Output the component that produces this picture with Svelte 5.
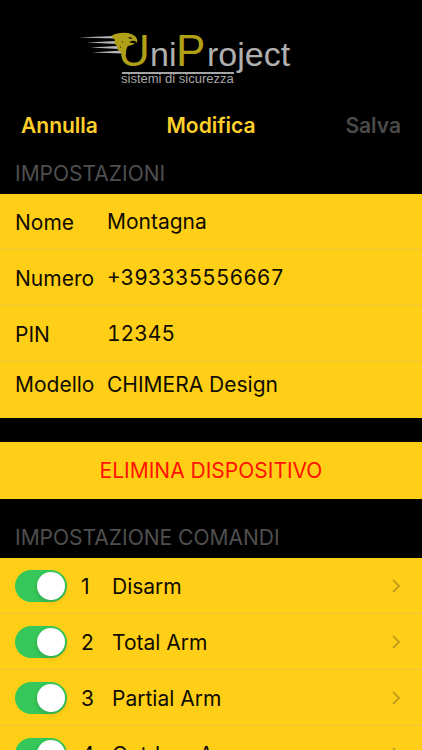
<script>
  let fields = $state([
    { id: "nome", label: "Nome", type: "text", value: "Montagna" },
    { id: "numero", label: "Numero", type: "tel", value: "+393335556667" },
    { id: "pin", label: "PIN", type: "text", value: "12345" },
  ])

  let commands = $state([
    { number: 1, name: "Disarm", enabled: true },
    { number: 2, name: "Total Arm", enabled: true },
    { number: 3, name: "Partial Arm", enabled: true },
    { number: 4, name: "Outdoor Arm", enabled: true },
  ])
</script>

<main class="screen">
  <header>
    <svg class="logo" viewBox="0 0 220 70" role="img" aria-label="UniProject">
      <!-- trailing feathers -->
      <g fill="#b4b4b4">
        <path d="M0 19.5 L35 18 L36 20.5 Z" />
        <path d="M9 24.5 L37 23 L39 26 Z" />
        <path d="M12 29.5 L39 28 L41 31 Z" />
        <path d="M14 34.5 L43 32.5 L44 35.5 Z" />
      </g>
      <text class="big" x="40" y="48">U</text>
      <text class="small" x="72" y="48">ni</text>
      <text class="big" x="98" y="48">P</text>
      <text class="small" x="129" y="48">roject</text>
      <!-- eagle head -->
      <path
        d="M33 18 Q40 14 50 15 Q55 16 58 19 Q60 22 59 25 Q57 22 54 23 L51 24 L54 25 L57 25 Q54 28 50 28 Q48 30 48 36 L44 38 L43 34 L40 32 L39 28 L36 25 L37 22 Z"
        fill="#b0a018"
      />
      <path d="M50 19 L55 20 L52 21 Z" fill="#000" />
      <path d="M44 23 L45 25 M42 28 L43 30" stroke="#5c5409" stroke-width="1" />
      <rect x="44" y="54" width="112" height="2" fill="#a6a6a6" />
      <text class="tagline" x="43" y="65">sistemi di sicurezza</text>
    </svg>
    <nav>
      <button class="action" type="button">Annulla</button>
      <h1>Modifica</h1>
      <button class="action save" type="button" disabled>Salva</button>
    </nav>
  </header>

  <h2>IMPOSTAZIONI</h2>
  <section class="group">
    {#each fields as field (field.id)}
      <div class="row">
        <label class="field-label" for={field.id}>{field.label}</label>
        <input id={field.id} class="text" type={field.type} bind:value={field.value} />
      </div>
    {/each}
    <div class="row model">
      <span>Modello</span>
      <span>CHIMERA Design</span>
    </div>
  </section>

  <button class="delete" type="button">ELIMINA DISPOSITIVO</button>

  <h2 class="commands-title">IMPOSTAZIONE COMANDI</h2>
  <section class="group">
    {#each commands as command (command.number)}
      <div class="row command">
        <input
          id="command-{command.number}"
          class="switch"
          type="checkbox"
          role="switch"
          bind:checked={command.enabled}
        />
        <label class="command-label" for="command-{command.number}">
          <span>{command.number}</span>
          <span>{command.name}</span>
        </label>
        <button class="open" type="button" aria-label="Apri {command.name}">
          <svg viewBox="0 0 8 14" width="8" height="14">
            <path d="M1 1 L7 7 L1 13" fill="none" stroke="#c39f1c" stroke-width="2" />
          </svg>
        </button>
      </div>
    {/each}
  </section>
</main>

<style>
  :global(body) {
    background: #000;
  }
  .screen {
    height: 100vh;
    overflow-y: auto;
    scrollbar-width: none;
    background: #000;
    color: #100c00;
    font-family: Inter, "Liberation Sans", sans-serif;
    font-size: 21px;
    line-height: 28px;
  }
  header {
    padding-top: 18px;
  }
  .logo {
    display: block;
    width: 220px;
    height: 70px;
    margin-left: 78px;
    font-family: "Liberation Sans", sans-serif;
  }
  .big {
    font-size: 44px;
    fill: #b0a018;
  }
  .small {
    font-size: 34px;
    fill: #b0b0b0;
  }
  .tagline {
    font-size: 13px;
    fill: #a6a6a6;
  }
  nav {
    display: grid;
    grid-template-columns: 1fr auto 1fr;
    align-items: center;
    height: 72px;
    padding: 4px 21px 0;
    box-sizing: border-box;
  }
  button {
    border: none;
    margin: 0;
    padding: 0;
    font: inherit;
    cursor: pointer;
  }
  h1,
  .action {
    margin: 0;
    background: none;
    color: #ffd02b;
    font-size: 21px;
    font-weight: 600;
  }
  .action {
    justify-self: start;
  }
  .save {
    justify-self: end;
    color: #4b4b4b;
    cursor: default;
  }
  h2 {
    margin: 0;
    padding: 0 15px 6px;
    color: #4f4f4f;
    font-size: 21px;
    font-weight: 400;
  }
  .commands-title {
    padding-top: 25px;
  }
  .group {
    background: #ffcf17;
  }
  .row {
    display: grid;
    grid-template-columns: 92px 1fr;
    align-items: center;
    height: 56px;
    padding: 0 15px;
    box-sizing: border-box;
    border-bottom: 1px solid #ecc540;
  }
  .row:last-child {
    border-bottom: none;
  }
  .field-label {
    padding-top: 2px;
  }
  .text {
    width: 100%;
    min-width: 0;
    padding: 0;
    border: none;
    outline: none;
    background: none;
    color: inherit;
    font: inherit;
    font-variant-numeric: tabular-nums;
  }
  .model {
    padding-bottom: 10px;
  }
  .delete {
    display: block;
    width: 100%;
    height: 57px;
    margin-top: 24px;
    background: #ffcf17;
    color: #ff1200;
  }
  .command {
    grid-template-columns: 52px 1fr auto;
    column-gap: 14px;
    padding-right: 22px;
  }
  .command-label {
    display: grid;
    grid-template-columns: 31px 1fr;
    padding-top: 2px;
  }
  .switch {
    display: flex;
    appearance: none;
    width: 52px;
    height: 32px;
    margin: 0;
    padding: 2px;
    box-sizing: border-box;
    border-radius: 16px;
    background: #d9b73a;
    cursor: pointer;
  }
  .switch::before {
    content: "";
    width: 28px;
    height: 28px;
    border-radius: 50%;
    background: #fff;
    box-shadow: 0 2px 5px rgba(0, 0, 0, 0.16);
  }
  .switch:checked {
    justify-content: flex-end;
    background: #35c759;
  }
  .open {
    display: flex;
    background: none;
  }
</style>
